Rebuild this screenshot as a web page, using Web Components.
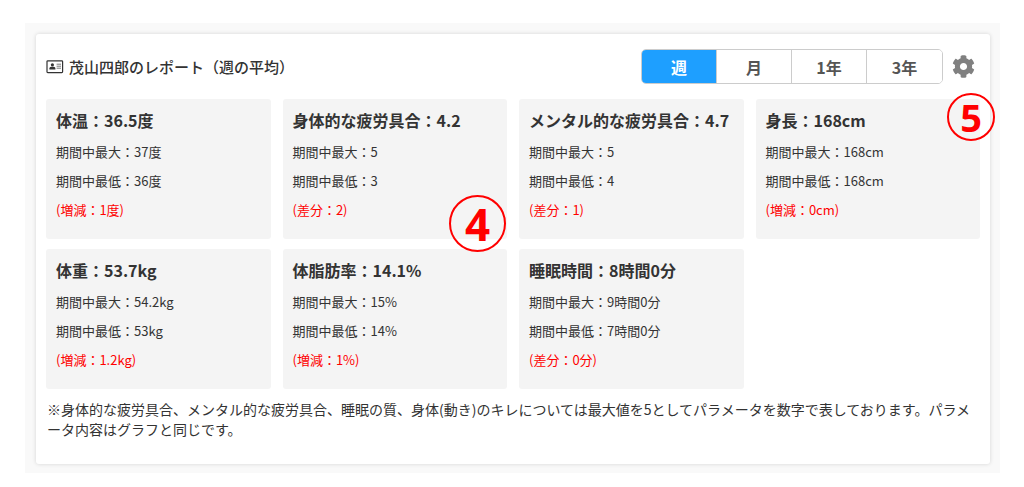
<!DOCTYPE html>
<html lang="ja">
<head>
  <meta charset="utf-8">
  <meta name="viewport" content="width=device-width, initial-scale=1">
  <title>週間レポート</title>
  <style>
    body {
      margin: 0;
      padding: 23px 24px 14px 25px;
      background: #fff;
      color: #333;
      font-family: 'Noto Sans CJK JP', sans-serif;
    }
  </style>
</head>
<body>
  <report-panel>
    <report-title slot="title">茂山四郎のレポート（週の平均）</report-title>
    <range-tabs slot="tools" ranges="週,月,1年,3年" active="週"></range-tabs>
    <settings-button slot="tools"></settings-button>

    <metric-card label="体温" value="36.5度" max="37度" min="36度" diff="増減：1度"></metric-card>
    <metric-card label="身体的な疲労具合" value="4.2" max="5" min="3" diff="差分：2">
      <step-badge class="large">4</step-badge>
    </metric-card>
    <metric-card label="メンタル的な疲労具合" value="4.7" max="5" min="4" diff="差分：1"></metric-card>
    <metric-card label="身長" value="168cm" max="168cm" min="168cm" diff="増減：0cm">
      <step-badge>5</step-badge>
    </metric-card>
    <metric-card label="体重" value="53.7kg" max="54.2kg" min="53kg" diff="増減：1.2kg"></metric-card>
    <metric-card label="体脂肪率" value="14.1%" max="15%" min="14%" diff="増減：1%"></metric-card>
    <metric-card label="睡眠時間" value="8時間0分" max="9時間0分" min="7時間0分" diff="差分：0分"></metric-card>

    <span slot="note">※身体的な疲労具合、メンタル的な疲労具合、睡眠の質、身体(動き)のキレについては最大値を5としてパラメータを数字で表しております。パラメータ内容はグラフと同じです。</span>
  </report-panel>

  <script>
    // Outer frame, header row, metric grid and note
    class ReportPanel extends HTMLElement {
      constructor() {
        super();
        this.attachShadow({ mode: 'open' });
      }

      connectedCallback() {
        this.shadowRoot.innerHTML = `
          <style>
            :host {
              display: block;
              padding: 11px 10px 9px 11px;
              background: #f9f9f9;
            }

            .panel {
              padding: 15px 10px 25px;
              background: #fff;
              border-radius: 3px;
              box-shadow: 0 0 4px rgba(0, 0, 0, 0.15);
            }

            header {
              display: flex;
              align-items: center;
              justify-content: space-between;
              margin-bottom: 15px;
            }

            .tools {
              display: flex;
              align-items: center;
              gap: 9px;
              padding-right: 5px;
            }

            .grid {
              display: grid;
              grid-template-columns: repeat(4, 1fr);
              gap: 10px 12px;
            }

            .note {
              margin: 10px 0 0;
              padding: 0 1px;
              font-size: 14px;
              line-height: 20px;
              line-break: anywhere;
            }
          </style>
          <section class="panel">
            <header>
              <slot name="title"></slot>
              <div class="tools"><slot name="tools"></slot></div>
            </header>
            <div class="grid"><slot></slot></div>
            <p class="note"><slot name="note"></slot></p>
          </section>
        `;
      }
    }

    class ReportTitle extends HTMLElement {
      constructor() {
        super();
        this.attachShadow({ mode: 'open' });
      }

      connectedCallback() {
        this.shadowRoot.innerHTML = `
          <style>
            :host {
              display: block;
            }

            h1 {
              display: flex;
              align-items: center;
              gap: 5px;
              margin: 0;
              font-size: 15px;
              font-weight: 500;
              line-height: 24px;
            }
          </style>
          <h1>
            <svg width="18" height="14" viewBox="0 0 18 14" aria-hidden="true">
              <rect x="1" y=".8" width="15.6" height="11.8" rx=".8" fill="none" stroke="#333" stroke-width="1.2"/>
              <circle cx="6.4" cy="4.8" r="1.6" fill="#333"/>
              <path d="M3.4 9.4V8.6q0-1.8 1.7-1.8h2.6q1.7 0 1.7 1.8v.8z" fill="#333"/>
              <path d="M10.6 4.2H15M10.6 6.2H15M10.6 8.2H15" stroke="#777" stroke-width="1"/>
            </svg>
            <slot></slot>
          </h1>
        `;
      }
    }

    // Segmented buttons for the period
    class RangeTabs extends HTMLElement {
      constructor() {
        super();
        this.attachShadow({ mode: 'open' });
      }

      connectedCallback() {
        const active = this.getAttribute('active');
        const buttons = this.getAttribute('ranges')
          .split(',')
          .map((r) => `<button type="button" aria-pressed="${r === active}">${r}</button>`)
          .join('');

        this.shadowRoot.innerHTML = `
          <style>
            :host {
              display: block;
            }

            .tabs {
              display: flex;
              border: 1px solid #ccc;
              border-radius: 5px;
              overflow: hidden;
            }

            button {
              box-sizing: border-box;
              width: 75px;
              height: 33px;
              padding: 0;
              border: 0;
              border-right: 1px solid #ccc;
              background: #fff;
              color: #555;
              font-family: inherit;
              font-size: 16px;
              font-weight: 700;
              line-height: 24px;
              cursor: pointer;
            }

            button:last-child {
              border-right: 0;
            }

            button[aria-pressed='true'] {
              background: #1e9fff;
              color: #fff;
            }
          </style>
          <div class="tabs" role="group" aria-label="期間">${buttons}</div>
        `;
        this.shadowRoot.querySelectorAll('button').forEach((button) => {
          button.addEventListener('click', () => this.select(button));
        });
      }

      select(target) {
        this.shadowRoot.querySelectorAll('button').forEach((button) => {
          button.setAttribute('aria-pressed', button === target);
        });
      }
    }

    class SettingsButton extends HTMLElement {
      constructor() {
        super();
        this.attachShadow({ mode: 'open' });
      }

      connectedCallback() {
        this.shadowRoot.innerHTML = `
          <style>
            :host {
              display: block;
            }

            button {
              display: block;
              padding: 0;
              border: 0;
              background: none;
              color: #808080;
              cursor: pointer;
            }

            svg {
              display: block;
            }
          </style>
          <button type="button" aria-label="設定">
            <svg width="23" height="23" viewBox="0 0 512 512" fill="currentColor" aria-hidden="true">
              <path d="M487.4 315.7l-42.6-24.6c4.3-23.2 4.3-47 0-70.2l42.6-24.6c4.9-2.8 7.1-8.6 5.5-14-11.1-35.6-30-67.8-54.7-94.6-3.8-4.1-10-5.1-14.8-2.3L380.8 110c-17.9-15.4-38.5-27.3-60.8-35.1V25.8c0-5.6-3.9-10.5-9.4-11.7-36.7-8.2-74.3-7.8-109.2 0-5.5 1.2-9.4 6.1-9.4 11.7V75c-22.2 7.9-42.8 19.8-60.8 35.1L88.7 85.5c-4.9-2.8-11-1.9-14.8 2.3-24.7 26.7-43.6 58.9-54.7 94.6-1.7 5.4.6 11.2 5.5 14L67.3 221c-4.3 23.2-4.3 47 0 70.2l-42.6 24.6c-4.9 2.8-7.1 8.6-5.5 14 11.1 35.6 30 67.8 54.7 94.6 3.8 4.1 10 5.1 14.8 2.3l42.6-24.6c17.9 15.4 38.5 27.3 60.8 35.1v49.2c0 5.6 3.9 10.5 9.4 11.7 36.7 8.2 74.3 7.8 109.2 0 5.5-1.2 9.4-6.1 9.4-11.7v-49.2c22.2-7.9 42.8-19.8 60.8-35.1l42.6 24.6c4.9 2.8 11 1.9 14.8-2.3 24.7-26.7 43.6-58.9 54.7-94.6 1.5-5.5-.7-11.3-5.6-14.1zM256 336c-44.1 0-80-35.9-80-80s35.9-80 80-80 80 35.9 80 80-35.9 80-80 80z"/>
            </svg>
          </button>
        `;
      }
    }

    class MetricCard extends HTMLElement {
      constructor() {
        super();
        this.attachShadow({ mode: 'open' });
      }

      connectedCallback() {
        const label = this.getAttribute('label');
        const value = this.getAttribute('value');
        const max = this.getAttribute('max');
        const min = this.getAttribute('min');
        const diff = this.getAttribute('diff');

        this.shadowRoot.innerHTML = `
          <style>
            :host {
              display: block;
              position: relative; /* anchor for the badge */
              padding: 9px 10px 19px;
              background: #f4f4f4;
              border-radius: 3px;
            }

            h2 {
              margin: 0 0 10px;
              font-size: 16px;
              font-weight: 700;
              line-height: 24px;
              white-space: nowrap;
            }

            p {
              margin: 0 0 9px;
              font-size: 13px;
              line-height: 20px;
            }

            .diff {
              margin-bottom: 0;
              color: #f00;
            }
          </style>
          <h2>${label}：${value}</h2>
          <p>期間中最大：${max}</p>
          <p>期間中最低：${min}</p>
          <p class="diff">(${diff})</p>
          <slot></slot>
        `;
      }
    }

    // Numbered circle lying over the corner of a card
    class StepBadge extends HTMLElement {
      constructor() {
        super();
        this.attachShadow({ mode: 'open' });
      }

      connectedCallback() {
        this.shadowRoot.innerHTML = `
          <style>
            :host {
              display: flex;
              align-items: center;
              justify-content: center;
              box-sizing: border-box;
              position: absolute;
              z-index: 1;
              top: -6px;
              right: -15px;
              width: 48px;
              height: 48px;
              border: 2px solid #f00;
              border-radius: 50%;
              color: #f00;
              font-family: 'Noto Sans', 'Open Sans', sans-serif;
              font-size: 38px;
              font-weight: 700;
              line-height: 44px;
            }

            :host(.large) {
              top: auto;
              right: 1px;
              bottom: -13px;
              width: 57px;
              height: 57px;
              font-size: 44px;
            }
          </style>
          <slot></slot>
        `;
      }
    }

    customElements.define('report-panel', ReportPanel);
    customElements.define('report-title', ReportTitle);
    customElements.define('range-tabs', RangeTabs);
    customElements.define('settings-button', SettingsButton);
    customElements.define('metric-card', MetricCard);
    customElements.define('step-badge', StepBadge);
  </script>
</body>
</html>
